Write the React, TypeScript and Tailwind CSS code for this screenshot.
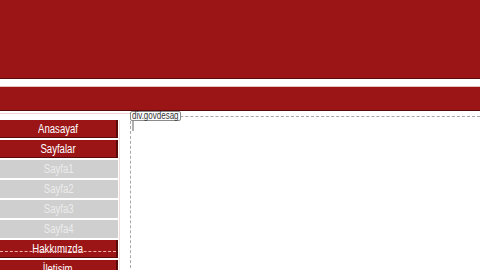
import React from "react";

const items: { label: string; sub?: boolean; dashed?: boolean }[] = [
  { label: "Anasayaf" },
  { label: "Sayfalar" },
  { label: "Sayfa1", sub: true },
  { label: "Sayfa2", sub: true },
  { label: "Sayfa3", sub: true },
  { label: "Sayfa4", sub: true },
  { label: "Hakkımızda", dashed: true },
  { label: "İletişim" },
];

export default function App() {
  return (
    <div
      className="w-[480px] h-[270px] overflow-hidden bg-white"
      style={{ fontFamily: '"Liberation Sans", Arial, sans-serif' }}
    >
      <div className="h-[79px] bg-[#9b1517] border-b border-[#5a0a0b]" />
      <div className="h-[8px] bg-white border-b border-[#e6c4c4]" />
      <div className="h-[24px] bg-[#9b1517] border-b border-[#5a0a0b]" />
      <div className="flex">
        <div className="w-[120px] flex flex-col">
          <div className="h-[2px]" />
          <div className="h-[1px] bg-[#f0d4d4] w-[130px]" />
          <div className="h-[6px]" />
          <div className="flex flex-col gap-[2px] border-r border-[#f3dede] w-[120px] pr-[1px]">
            {items.map((it) => (
              <div
                key={it.label}
                className={
                  "relative h-[18px] w-[118px] flex items-center justify-center text-[12px] leading-none " +
                  (it.sub
                    ? "bg-[#cfcfcf] text-[#ececec]"
                    : "bg-[#9b1517] text-white border-r-2 border-b border-[#5a0a0b]")
                }
              >
                <span className="inline-block scale-x-80">{it.label}</span>
                {it.dashed && (
                  <div className="absolute left-0 right-0 bottom-[5px] border-b border-dashed border-[#f4b0b0]" />
                )}
              </div>
            ))}
          </div>
        </div>
        <div className="flex-1 ml-[10px] mt-[5px] relative border-l border-t border-dashed border-[#a8a8a8]">
          <div className="absolute -top-[6px] -left-[1px] bg-white border border-[#8a8a8a] rounded-[2px] pl-[1px] pr-[1px] text-[10px] leading-[8px] text-[#333]">
            <span className="inline-block scale-x-80 origin-left -mr-[11px]">div.govdesag</span>
          </div>
          <div className="ml-[1px] mt-[4px] w-[2px] h-[10px] bg-[#b0b0b0]" />
        </div>
      </div>
    </div>
  );
}
